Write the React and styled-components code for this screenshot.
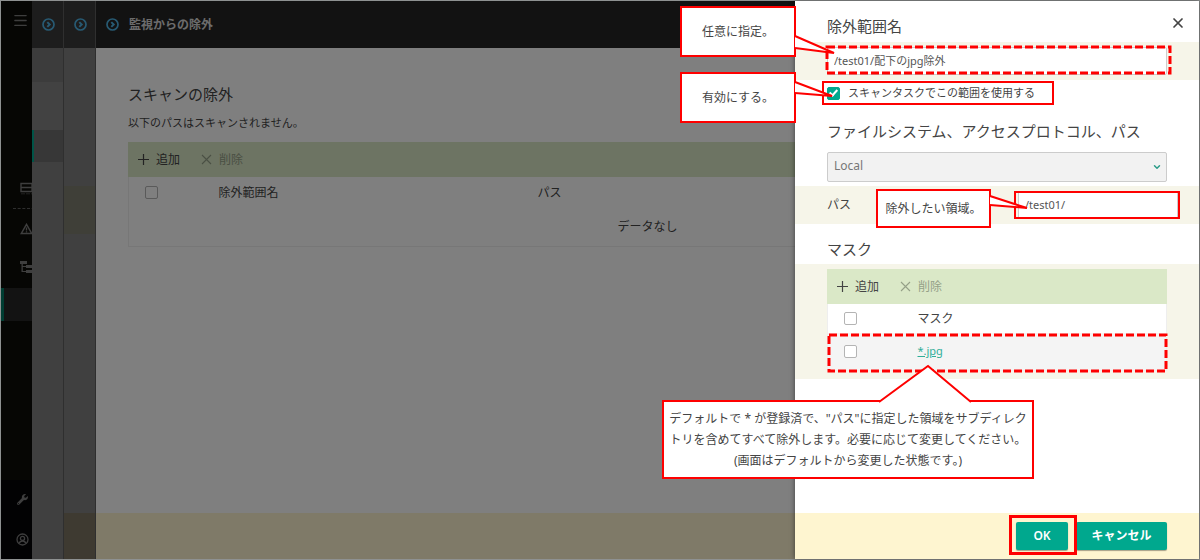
import styled, { createGlobalStyle, css } from 'styled-components';
import { ChevronDown, Menu, X } from 'lucide-react';
import { FaWrench } from 'react-icons/fa';

const RED = '#fe0000';
const GREEN = '#00a88e';

const GlobalStyle = createGlobalStyle`
    *, *::before, *::after {
        box-sizing: border-box;
    }
    body {
        margin: 0;
        background-color: #8e9191;
        color: #444;
        font-family: "Noto Sans", "Noto Sans CJK JP", sans-serif;
        font-size: 12px;
        line-height: 16px;
    }
    button, input, select {
        font: inherit;
        color: inherit;
    }
    h1, h2, p {
        margin: 0;
    }
`

/* ---------- page behind the drawer ---------- */

const Shell = styled.div`
    position: relative;
    min-height: 100vh;
    padding: 1px;
    display: flex;
    overflow: hidden;
`
const Rail = styled.nav`
    flex: none;
    width: 31px;
    background-color: #0c0c08;
    color: #7c7c7c;
    display: flex;
    flex-direction: column;
    overflow: hidden;
`
const RailButton = styled.button`
    flex: none;
    height: ${props => props.$height}px;
    padding: 0 0 0 ${props => props.$indent}px;
    border: 0;
    background: none;
    display: flex;
    align-items: center;
    color: inherit;

    svg {
        flex: none;
    }
`
const RailGap = styled.div`
    flex: none;
    height: ${props => props.$height}px;
`
const RailDivider = styled.hr`
    flex: none;
    width: 100%;
    margin: 0 0 0 12px;
    border: 0;
    border-top: 1px dashed #5c5c5c;
`
const RailActive = styled.div`
    flex: none;
    height: 33px;
    border-left: 3px solid #007a64;
    background-color: #262626;
`
const RailBottom = styled.div`
    margin-top: auto;
    background-color: #050507;
    display: flex;
    flex-direction: column;
`
const Pane = styled.section`
    flex: none;
    width: 32px;
    background-color: #808080;
    border-right: 1px solid #5e5e5e;
    display: flex;
    flex-direction: column;
`
const PaneHead = styled.header`
    flex: none;
    height: 47px;
    padding-left: 10px;
    background-color: #3a3a3a;
    color: #4fb4e6;
    display: flex;
    align-items: center;
`
const PaneBlock = styled.div`
    flex: none;
    height: ${props => props.$height}px;
    background-color: ${props => props.$color};
    ${props => props.$active && css`
        border-left: 2px solid ${GREEN};
    `}
`
const PaneFoot = styled.div`
    height: 46px;
    margin-top: auto;
    background-color: #7d7562;
`
const Main = styled.main`
    flex: 1;
    min-width: 0;
    background-color: #fff;
    display: flex;
    flex-direction: column;
`
const MainHead = styled.header`
    height: 47px;
    padding-left: 10px;
    background-color: #242424;
    color: #4fb4e6;
    display: flex;
    align-items: center;
    gap: 10px;
`
const MainTitle = styled.h1`
    color: #d8d8d8;
    font-size: 12px;
    line-height: 16px;
    font-weight: 700;
`
const MainBody = styled.div`
    flex: 1;
    padding: 36px 32px 0;
`
const MainFoot = styled.footer`
    height: 46px;
    background-color: #fff5d0;
`
const Heading = styled.h2`
    font-size: 15px;
    line-height: 20px;
    font-weight: 400;
`
const Note = styled.p`
    padding: 11px 0;
    font-size: 11px;
    line-height: 16px;
`

/* ---------- list with toolbar, used in page and drawer ---------- */

const Toolbar = styled.div`
    height: 35px;
    padding-left: 9px;
    background-color: #dae8c7;
    display: flex;
    align-items: center;
    gap: 20px;
`
const ToolButton = styled.button`
    padding: 0;
    border: 0;
    background: none;
    display: flex;
    align-items: center;
    gap: 6px;

    &:disabled {
        color: #95a088;
    }
`
const Table = styled.table`
    width: 100%;
    border: 1px solid #eee;
    border-top: 0;
    border-collapse: collapse;
    table-layout: fixed;
    background-color: #fff;
`
const Col = styled.col`
    width: ${props => props.$width};
`
const Row = styled.tr`
    height: ${props => props.$height}px;
    background-color: ${props => props.$shaded ? '#f4f4f4' : 'transparent'};
`
const HeadCell = styled.th`
    padding: 0;
    font-weight: 400;
    text-align: left;
`
const Cell = styled.td`
    padding: 0;
    text-align: ${props => props.$center ? 'center' : 'left'};
`
const CheckBox = styled.input.attrs({ type: 'checkbox' })`
    appearance: none;
    position: relative;
    flex: none;
    display: block;
    width: 13px;
    height: 13px;
    margin: 0;
    border: 1px solid #b4b4b4;
    border-radius: 2px;
    background-color: #fff;

    &:checked {
        border-color: ${GREEN};
        background-color: ${GREEN};
    }
    &:checked::after {
        content: '';
        position: absolute;
        left: 3px;
        top: 0;
        width: 5px;
        height: 8px;
        border: solid #fff;
        border-width: 0 2px 2px 0;
        transform: rotate(42deg);
    }
    td > &, th > & {
        margin-left: 16px;
    }
`
const MaskLink = styled.a`
    color: #2fae98;
    font-size: 11px;
    text-decoration: underline;
`

/* ---------- drawer ---------- */

const Shade = styled.div`
    position: absolute;
    inset: 1px;
    background-color: rgba(0, 0, 0, 0.5);
`
const Drawer = styled.aside`
    position: absolute;
    top: 1px;
    right: 1px;
    bottom: 1px;
    width: 404px;
    background-color: #fff;
    box-shadow: 0 0 5px rgba(0, 0, 0, 0.5);
    display: flex;
    flex-direction: column;
`
const DrawerHead = styled.header`
    height: 41px;
    padding: 9px 13px 0 32px;
    display: flex;
    align-items: center;
    justify-content: space-between;
`
const CloseButton = styled.button`
    align-self: flex-start;
    padding: 5px 0 0;
    border: 0;
    background: none;
    line-height: 0;
`
const Band = styled.div`
    padding: 5px 32px ${props => props.$bottom || 5}px;
    background-color: #f6f5e9;
`
const PathBand = styled(Band)`
    margin-top: 4px;
    padding-right: 21px;
    display: flex;
    align-items: center;
    justify-content: space-between;
`
const Section = styled.div`
    padding: ${props => props.$top}px 32px ${props => props.$bottom}px;
`
const Anchor = styled.div`
    position: relative;
    width: ${props => props.$width || 'auto'};
`
const TextInput = styled.input`
    display: block;
    width: 100%;
    height: 28px;
    padding: 0 6px 2px;
    border: 1px solid #ccc;
    border-radius: 2px;
    background-color: #fff;
    color: #555;
    font-size: 11px;
`
const CheckLine = styled.div`
    height: 26px;
    padding-left: 32px;
    display: flex;
    align-items: center;
`
const CheckLabel = styled.label`
    padding-right: 12px;
    display: flex;
    align-items: center;
    gap: 8px;
    font-size: 11px;
    line-height: 22px;
`
const SelectWrap = styled.div`
    position: relative;
    margin: 0 32px;

    svg {
        position: absolute;
        right: 5px;
        top: 10px;
        color: #2b9c88;
        pointer-events: none;
    }
`
const Select = styled.select`
    appearance: none;
    display: block;
    width: 100%;
    height: 30px;
    padding: 0 6px 2px;
    border: 1px solid #ccc;
    border-radius: 2px;
    background-color: #f2f2f2;
    color: #777;
`
const DrawerFoot = styled.footer`
    height: 46px;
    margin-top: auto;
    padding-right: 32px;
    background-color: #fef5d0;
    display: flex;
    align-items: center;
    justify-content: flex-end;
    gap: 8px;
`
const Action = styled.button`
    display: block;
    width: ${props => props.$width};
    height: 28px;
    padding: 0;
    border: 0;
    border-radius: 2px;
    background-color: ${GREEN};
    box-shadow: 0 1px 1px rgba(0, 0, 0, 0.35);
    color: #fff;
    font-weight: 600;
`

/* ---------- red notes drawn over the screen ---------- */

const Frame = styled.span`
    position: absolute;
    inset: ${props => props.$inset};
    border: ${props => props.$thick ? 3 : 2}px solid ${RED};
    pointer-events: none;
`
const DashSvg = styled.svg`
    position: absolute;
    top: ${props => props.$top}px;
    left: ${props => props.$left}px;
    width: ${props => props.$width};
    height: ${props => props.$height}px;
    overflow: visible;
    pointer-events: none;

    rect {
        width: 100%;
        height: 100%;
        fill: none;
        stroke: ${RED};
        stroke-width: 3px;
        stroke-dasharray: 8 3;
    }
`
const Callout = styled.div`
    position: absolute;
    z-index: 2;
    top: ${props => props.$top}px;
    left: ${props => props.$left}px;
    width: ${props => props.$width}px;
    padding: ${props => props.$pad}px 0;
    border: 2px solid ${RED};
    background-color: #fff;
    font-size: 12px;
    line-height: 21px;
    text-align: center;
    white-space: nowrap;
`
const Tail = styled.svg`
    position: absolute;
    top: ${props => props.$top}px;
    left: ${props => props.$left}px;
    overflow: visible;

    path {
        fill: #fff;
        stroke: ${RED};
        stroke-width: 2px;
    }
`

function ArrowIcon(){
    return(
        <svg width="13" height="13" viewBox="0 0 13 13" fill="none" stroke="currentColor">
            <circle cx="6.5" cy="6.5" r="5.5" strokeWidth="1.7"/>
            <path d="M5.3 4.1 7.7 6.5 5.3 8.9" strokeWidth="2"/>
        </svg>
    )
}

function PlusIcon(){
    return(
        <svg width="13" height="13" viewBox="0 0 13 13" stroke="currentColor" strokeWidth="1.2">
            <path d="M6.5 1v11M1 6.5h11"/>
        </svg>
    )
}

function CrossIcon(){
    return(
        <svg width="13" height="13" viewBox="0 0 13 13" stroke="currentColor" strokeWidth="1.1">
            <path d="m2 2 9 9M11 2l-9 9"/>
        </svg>
    )
}

function ServerIcon(){
    return(
        <svg width="13" height="13" viewBox="0 0 13 13" fill="none" stroke="currentColor">
            <path d="M1 1.5h11v8H1zM1 5.5h11" strokeWidth="1.4"/>
            <path d="M1 11.8h11" strokeDasharray="4 1" opacity="0.5"/>
        </svg>
    )
}

function AlertIcon(){
    return(
        <svg width="13" height="12" viewBox="0 0 13 12" fill="none" stroke="currentColor">
            <path d="M6.5 1.4 1.3 10.5h10.4z" strokeWidth="1.5"/>
            <path d="M6.5 4.5v3M6.5 8.3v1.2" strokeWidth="1.3"/>
        </svg>
    )
}

function TreeIcon(){
    return(
        <svg width="13" height="12" viewBox="0 0 13 12" fill="currentColor">
            <path d="M0 0h7v3H0zM6 4h7v3H6zM6 9h7v3H6zM1.5 3h1.3v8H1.5zM2 5h4v1H2zM2 10h4v1H2z"/>
        </svg>
    )
}

function UserIcon(){
    return(
        <svg width="13" height="13" viewBox="0 0 13 13" fill="none" stroke="currentColor" strokeWidth="1.3">
            <circle cx="6.5" cy="6.5" r="5.5"/>
            <circle cx="6.5" cy="5.4" r="2.1"/>
            <path d="M3.2 10.4C3.8 8.6 5 8 6.5 8s2.7.6 3.3 2.4"/>
        </svg>
    )
}

function Dashes(props){
    return <DashSvg {...props}><rect/></DashSvg>
}

function ListToolbar(){
    return(
        <Toolbar>
            <ToolButton type="button"><PlusIcon/>追加</ToolButton>
            <ToolButton type="button" disabled><CrossIcon/>削除</ToolButton>
        </Toolbar>
    )
}

function Navigation(){
    return(
        <Rail>
            <RailButton type="button" aria-label="menu" $height={39} $indent={11}><Menu size={17} strokeWidth={1.8}/></RailButton>
            <RailGap $height={136}/>
            <RailButton type="button" aria-label="servers" $height={24} $indent={19}><ServerIcon/></RailButton>
            <RailGap $height={8}/>
            <RailDivider/>
            <RailButton type="button" aria-label="alerts" $height={40} $indent={19}><AlertIcon/></RailButton>
            <RailButton type="button" aria-label="devices" $height={36} $indent={19}><TreeIcon/></RailButton>
            <RailGap $height={3}/>
            <RailActive/>
            <RailBottom>
                <RailButton type="button" aria-label="settings" $height={39} $indent={16}><FaWrench size={11}/></RailButton>
                <RailButton type="button" aria-label="account" $height={40} $indent={15}><UserIcon/></RailButton>
            </RailBottom>
        </Rail>
    )
}

function ExclusionPage(){
    return(
        <Main>
            <MainHead>
                <ArrowIcon/>
                <MainTitle>監視からの除外</MainTitle>
            </MainHead>
            <MainBody>
                <Heading>スキャンの除外</Heading>
                <Note>以下のパスはスキャンされません。</Note>
                <ListToolbar/>
                <Table>
                    <colgroup><Col $width="90px"/><Col $width="319px"/><Col/></colgroup>
                    <thead>
                        <Row $height={31}>
                            <HeadCell><CheckBox aria-label="すべて選択"/></HeadCell>
                            <HeadCell>除外範囲名</HeadCell>
                            <HeadCell>パス</HeadCell>
                        </Row>
                    </thead>
                    <tbody>
                        <Row $height={38}>
                            <Cell colSpan={3} $center>データなし</Cell>
                        </Row>
                    </tbody>
                </Table>
            </MainBody>
            <MainFoot/>
        </Main>
    )
}

function ScopeDrawer(){
    return(
        <Drawer>
            <DrawerHead>
                <Heading as="label" htmlFor="scope-name">除外範囲名</Heading>
                <CloseButton type="button" aria-label="close"><X size={16} strokeWidth={2.6}/></CloseButton>
            </DrawerHead>
            <Band>
                <Anchor>
                    <TextInput id="scope-name" defaultValue="/test01/配下のjpg除外"/>
                    <Dashes $top={0} $left={0} $width="calc(100% + 3px)" $height={26}/>
                    <Callout $top={-41} $left={-147} $width={116} $pad={13}>
                        任意に指定。
                        <Tail $top={28} $left={112} width="42" height="20">
                            <path d="M1 0 40 17 1 12"/>
                        </Tail>
                    </Callout>
                </Anchor>
            </Band>
            <CheckLine>
                <Anchor>
                    <CheckLabel>
                        <CheckBox defaultChecked/>
                        スキャンタスクでこの範囲を使用する
                    </CheckLabel>
                    <Frame $inset="-1px -7px -1px -5px"/>
                    <Callout $top={-10} $left={-147} $width={116} $pad={13}>
                        有効にする。
                        <Tail $top={8} $left={112} width="42" height="20">
                            <path d="M1 0 38 14 1 11"/>
                        </Tail>
                    </Callout>
                </Anchor>
            </CheckLine>
            <Section $top={15} $bottom={11}>
                <Heading as="label" htmlFor="protocol">ファイルシステム、アクセスプロトコル、パス</Heading>
            </Section>
            <SelectWrap>
                <Select id="protocol" defaultValue="local">
                    <option value="local">Local</option>
                </Select>
                <ChevronDown size={10} strokeWidth={3.5}/>
            </SelectWrap>
            <PathBand>
                <label htmlFor="path">パス</label>
                <Anchor $width="160px">
                    <TextInput id="path" defaultValue="/test01/"/>
                    <Frame $inset="0 -2px 0 -4px"/>
                    <Callout $top={-2} $left={-142} $width={115} $pad={7}>
                        除外したい領域。
                        <Tail $top={5} $left={111} width="42" height="20">
                            <path d="M1 0 38 12 1 9"/>
                        </Tail>
                    </Callout>
                </Anchor>
            </PathBand>
            <Section $top={15} $bottom={5}>
                <Heading>マスク</Heading>
            </Section>
            <Band $bottom={8}>
                <ListToolbar/>
                <Anchor>
                    <Table>
                        <colgroup><Col $width="90px"/><Col/></colgroup>
                        <thead>
                            <Row $height={29}>
                                <HeadCell><CheckBox aria-label="すべて選択"/></HeadCell>
                                <HeadCell>マスク</HeadCell>
                            </Row>
                        </thead>
                        <tbody>
                            <Row $height={37} $shaded>
                                <Cell><CheckBox aria-label="*.jpg"/></Cell>
                                <Cell><MaskLink href="#mask">*.jpg</MaskLink></Cell>
                            </Row>
                        </tbody>
                    </Table>
                    <Dashes $top={31} $left={2} $width="calc(100% - 3px)" $height={36}/>
                    <Callout $top={96} $left={-165} $width={372} $pad={6}>
                        デフォルトで * が登録済で、"パス"に指定した領域をサブディレク<br/>
                        トリを含めてすべて除外します。必要に応じて変更してください。<br/>
                        (画面はデフォルトから変更した状態です。)
                        <Tail $top={-37} $left={215} width="94" height="38">
                            <path d="M0 37 49 1 92 37"/>
                        </Tail>
                    </Callout>
                </Anchor>
            </Band>
            <DrawerFoot>
                <Anchor>
                    <Action type="button" $width="52px">OK</Action>
                    <Frame $inset="-7px -9px -5px -7px" $thick/>
                </Anchor>
                <Action type="button" $width="91px">キャンセル</Action>
            </DrawerFoot>
        </Drawer>
    )
}

export default function App(){
    return(
        <Shell>
            <GlobalStyle/>
            <Navigation/>
            <Pane>
                <PaneHead><ArrowIcon/></PaneHead>
                <PaneBlock $height={34} $color="#787878"/>
                <PaneBlock $height={48} $color="#848484"/>
                <PaneBlock $height={32} $color="#6e6e6e" $active/>
            </Pane>
            <Pane>
                <PaneHead><ArrowIcon/></PaneHead>
                <PaneBlock $height={138} $color="#808080"/>
                <PaneBlock $height={48} $color="#7e7e70"/>
                <PaneFoot/>
            </Pane>
            <ExclusionPage/>
            <Shade/>
            <ScopeDrawer/>
        </Shell>
    )
}
